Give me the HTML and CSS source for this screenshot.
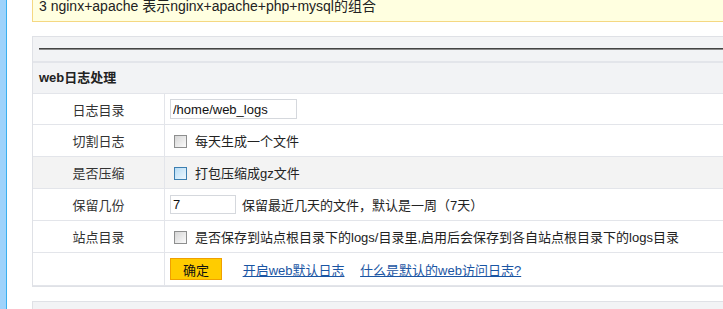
FILE: index.html
```html
<!DOCTYPE html>
<html>

<head>
  <title>web日志处理</title>
  <link rel="stylesheet" href="styles.css">
</head>

<body>
  <div class="side"></div>
  <div class="main">
    <div class="notice">3 nginx+apache 表示nginx+apache+php+mysql的组合</div>

    <div class="panel">
      <div class="panel-top">
        <div class="rule"></div>
      </div>
      <div class="panel-head">web日志处理</div>
      <table class="form">
        <tr class="r-first">
          <td class="label">日志目录</td>
          <td class="field"><input class="text wide" type="text" value="/home/web_logs"></td>
        </tr>
        <tr>
          <td class="label">切割日志</td>
          <td class="field"><span class="check"></span>每天生成一个文件</td>
        </tr>
        <tr class="hover">
          <td class="label">是否压缩</td>
          <td class="field"><span class="check on"></span>打包压缩成gz文件</td>
        </tr>
        <tr>
          <td class="label">保留几份</td>
          <td class="field"><input class="text short" type="text" value="7"><span class="note">保留最近几天的文件，默认是一周（7天）</span></td>
        </tr>
        <tr>
          <td class="label">站点目录</td>
          <td class="field"><span class="check"></span>是否保存到站点根目录下的logs/目录里,启用后会保存到各自站点根目录下的logs目录</td>
        </tr>
        <tr class="r-last">
          <td class="label"></td>
          <td class="field">
            <button class="btn">确定</button>
            <a href="#" class="link">开启web默认日志</a>
            <a href="#" class="link">什么是默认的web访问日志?</a>
          </td>
        </tr>
      </table>
    </div>

    <div class="panel next"></div>
  </div>
</body>

</html>
```

FILE: styles.css
```css
html, body {
  margin: 0;
  overflow: hidden;
}

body {
  display: flex;
  height: 309px;
  font-family: "Liberation Sans", "Noto Sans CJK SC", sans-serif;
  font-size: 13px;
  color: #222;
  background: #fff;
}

.side {
  width: 6px;
  flex: none;
  background: #9fd3fb;
  border-right: 1px solid #3ab0ef;
}

.main {
  flex: 1;
  margin-left: 25px;
  margin-right: -20px;
}

/* scrolled-off tip box at the top */
.notice {
  margin-top: -8px;
  padding: 4px 6px 5px;
  line-height: 20px;
  font-size: 14px;
  background: #ffffe0;
  border: 1px solid #f5d882;
  border-top: none;
  margin-bottom: 14px;
}

.panel {
  border: 1px solid #dfe1e6;
  border-right: none;
  background: #f2f3f5;
}

.panel-top {
  height: 24px;
  padding: 0 0 0 6px;
  display: flex;
  align-items: center;
  border-bottom: 2px solid #e3e5ea;
}

.rule {
  flex: 1;
  height: 0;
  border-top: 1px solid #444;
  border-bottom: 1px solid #8a8a8a;
}

.panel-head {
  height: 30px;
  line-height: 30px;
  padding-left: 6px;
  font-weight: bold;
  border-bottom: 1px solid #e3e5ea;
}

.form {
  width: 100%;
  border-collapse: collapse;
  background: #fff;
}

.form td {
  height: 31px;
  padding: 0;
  border-bottom: 1px solid #e3e5ea;
}

.form .r-first td {
  height: 30px;
}

.form .r-last td {
  height: 32px;
}

.form .label {
  width: 131px;
  text-align: center;
  color: #333;
  border-right: 1px solid #e3e5ea;
}

.form .field {
  padding-left: 5px;
  white-space: nowrap;
}

.form .hover td {
  background: #f3f3f3;
}

.text {
  height: 20px;
  box-sizing: border-box;
  border: 1px solid #d5d8dd;
  padding: 0 2px;
  font: 13px "Liberation Sans", "Noto Sans CJK SC", sans-serif;
  color: #111;
  vertical-align: middle;
  outline: none;
}

.wide {
  width: 127px;
}

.short {
  width: 66px;
  height: 19px;
}

.note {
  margin-left: 6px;
  vertical-align: middle;
}

.check {
  display: inline-block;
  width: 11px;
  height: 11px;
  border: 1px solid #8e8f8f;
  background: linear-gradient(135deg, #d6d6d6, #fbfbfb);
  margin: 0 8px 0 4px;
  vertical-align: -2px;
}

.check.on {
  border-color: #3c7fb1;
  background: linear-gradient(135deg, #b7dcf5, #eef7fd);
}

.btn {
  width: 52px;
  height: 22px;
  border: 1px solid #f0a000;
  background: #ffcc00;
  font: 13px "Liberation Sans", "Noto Sans CJK SC", sans-serif;
  color: #111;
  padding: 0;
  vertical-align: middle;
  margin-right: 17px;
}

.link {
  color: #1a55a3;
  margin-right: 12px;
  vertical-align: middle;
}

.panel.next {
  margin-top: 14px;
  height: 30px;
}
```
